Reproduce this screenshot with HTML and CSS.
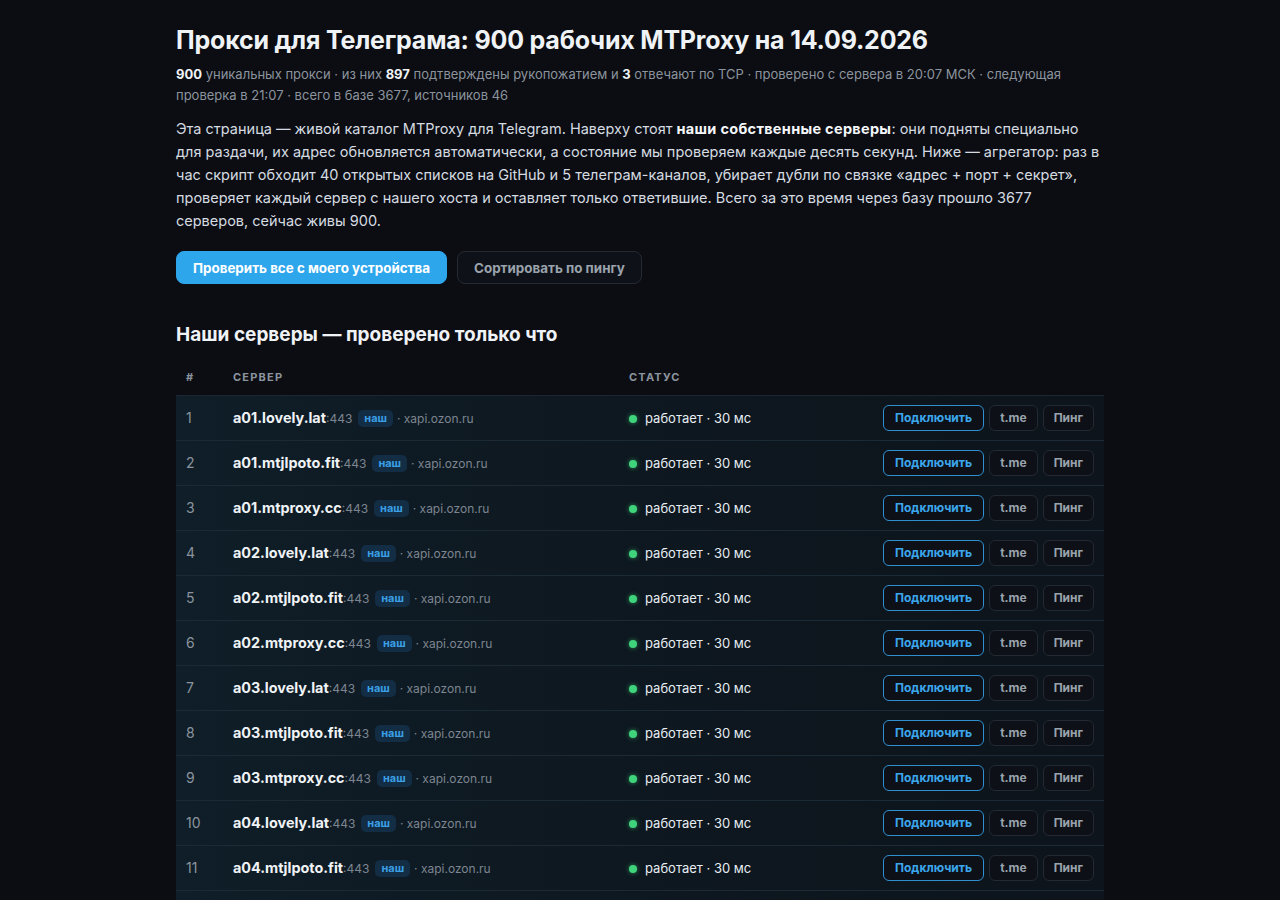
FILE: index.html
```html
<!DOCTYPE html>
<html lang="ru">
<head>
  <meta charset="UTF-8">
  <meta name="viewport" content="width=device-width, initial-scale=1.0">
  <title>Прокси для Телеграма</title>
  <link rel="stylesheet" href="styles.css">
</head>
<body>
<div class="page">
  <h1 class="page-title">Прокси для Телеграма: 900 рабочих MTProxy на 14.09.2026</h1>
  <div class="page-meta">
    <strong>900</strong> уникальных прокси · из них <strong>897</strong> подтверждены рукопожатием и <strong>3</strong> отвечают по TCP · проверено с сервера в 20:07 МСК · следующая проверка в 21:07 · всего в базе 3677, источников 46
  </div>
  <p class="page-intro">
    Эта страница — живой каталог MTProxy для Telegram. Наверху стоят <strong>наши собственные серверы</strong>: они подняты специально для раздачи, их адрес обновляется автоматически, а состояние мы проверяем каждые десять секунд. Ниже — агрегатор: раз в час скрипт обходит 40 открытых списков на GitHub и 5 телеграм-каналов, убирает дубли по связке «адрес + порт + секрет», проверяет каждый сервер с нашего хоста и оставляет только ответившие. Всего за это время через базу прошло 3677 серверов, сейчас живы 900.
  </p>
  <div class="page-actions">
    <button class="btn btn-primary">Проверить все с моего устройства</button>
    <button class="btn btn-ghost">Сортировать по пингу</button>
  </div>

  <h2 class="section-title">Наши серверы — проверено только что</h2>

  <table class="proxy-table">
    <thead>
      <tr>
        <th class="col-num">#</th>
        <th class="col-server">Сервер</th>
        <th class="col-status">Статус</th>
        <th class="col-actions"></th>
      </tr>
    </thead>
    <tbody>
      <tr>
        <td class="col-num">1</td>
        <td class="col-server"><span class="host">a01.lovely.lat</span><span class="port">:443</span> <span class="badge">наш</span> <span class="sni">· xapi.ozon.ru</span></td>
        <td class="col-status"><span class="dot"></span>работает · 30 мс</td>
        <td class="col-actions"><button class="act act-connect">Подключить</button><button class="act">t.me</button><button class="act">Пинг</button></td>
      </tr>
      <tr>
        <td class="col-num">2</td>
        <td class="col-server"><span class="host">a01.mtjlpoto.fit</span><span class="port">:443</span> <span class="badge">наш</span> <span class="sni">· xapi.ozon.ru</span></td>
        <td class="col-status"><span class="dot"></span>работает · 30 мс</td>
        <td class="col-actions"><button class="act act-connect">Подключить</button><button class="act">t.me</button><button class="act">Пинг</button></td>
      </tr>
      <tr>
        <td class="col-num">3</td>
        <td class="col-server"><span class="host">a01.mtproxy.cc</span><span class="port">:443</span> <span class="badge">наш</span> <span class="sni">· xapi.ozon.ru</span></td>
        <td class="col-status"><span class="dot"></span>работает · 30 мс</td>
        <td class="col-actions"><button class="act act-connect">Подключить</button><button class="act">t.me</button><button class="act">Пинг</button></td>
      </tr>
      <tr>
        <td class="col-num">4</td>
        <td class="col-server"><span class="host">a02.lovely.lat</span><span class="port">:443</span> <span class="badge">наш</span> <span class="sni">· xapi.ozon.ru</span></td>
        <td class="col-status"><span class="dot"></span>работает · 30 мс</td>
        <td class="col-actions"><button class="act act-connect">Подключить</button><button class="act">t.me</button><button class="act">Пинг</button></td>
      </tr>
      <tr>
        <td class="col-num">5</td>
        <td class="col-server"><span class="host">a02.mtjlpoto.fit</span><span class="port">:443</span> <span class="badge">наш</span> <span class="sni">· xapi.ozon.ru</span></td>
        <td class="col-status"><span class="dot"></span>работает · 30 мс</td>
        <td class="col-actions"><button class="act act-connect">Подключить</button><button class="act">t.me</button><button class="act">Пинг</button></td>
      </tr>
      <tr>
        <td class="col-num">6</td>
        <td class="col-server"><span class="host">a02.mtproxy.cc</span><span class="port">:443</span> <span class="badge">наш</span> <span class="sni">· xapi.ozon.ru</span></td>
        <td class="col-status"><span class="dot"></span>работает · 30 мс</td>
        <td class="col-actions"><button class="act act-connect">Подключить</button><button class="act">t.me</button><button class="act">Пинг</button></td>
      </tr>
      <tr>
        <td class="col-num">7</td>
        <td class="col-server"><span class="host">a03.lovely.lat</span><span class="port">:443</span> <span class="badge">наш</span> <span class="sni">· xapi.ozon.ru</span></td>
        <td class="col-status"><span class="dot"></span>работает · 30 мс</td>
        <td class="col-actions"><button class="act act-connect">Подключить</button><button class="act">t.me</button><button class="act">Пинг</button></td>
      </tr>
      <tr>
        <td class="col-num">8</td>
        <td class="col-server"><span class="host">a03.mtjlpoto.fit</span><span class="port">:443</span> <span class="badge">наш</span> <span class="sni">· xapi.ozon.ru</span></td>
        <td class="col-status"><span class="dot"></span>работает · 30 мс</td>
        <td class="col-actions"><button class="act act-connect">Подключить</button><button class="act">t.me</button><button class="act">Пинг</button></td>
      </tr>
      <tr>
        <td class="col-num">9</td>
        <td class="col-server"><span class="host">a03.mtproxy.cc</span><span class="port">:443</span> <span class="badge">наш</span> <span class="sni">· xapi.ozon.ru</span></td>
        <td class="col-status"><span class="dot"></span>работает · 30 мс</td>
        <td class="col-actions"><button class="act act-connect">Подключить</button><button class="act">t.me</button><button class="act">Пинг</button></td>
      </tr>
      <tr>
        <td class="col-num">10</td>
        <td class="col-server"><span class="host">a04.lovely.lat</span><span class="port">:443</span> <span class="badge">наш</span> <span class="sni">· xapi.ozon.ru</span></td>
        <td class="col-status"><span class="dot"></span>работает · 30 мс</td>
        <td class="col-actions"><button class="act act-connect">Подключить</button><button class="act">t.me</button><button class="act">Пинг</button></td>
      </tr>
      <tr>
        <td class="col-num">11</td>
        <td class="col-server"><span class="host">a04.mtjlpoto.fit</span><span class="port">:443</span> <span class="badge">наш</span> <span class="sni">· xapi.ozon.ru</span></td>
        <td class="col-status"><span class="dot"></span>работает · 30 мс</td>
        <td class="col-actions"><button class="act act-connect">Подключить</button><button class="act">t.me</button><button class="act">Пинг</button></td>
      </tr>
      <tr>
        <td class="col-num">12</td>
        <td class="col-server"><span class="host">a04.mtproxy.cc</span><span class="port">:443</span> <span class="badge">наш</span> <span class="sni">· xapi.ozon.ru</span></td>
        <td class="col-status"><span class="dot"></span>работает · 30 мс</td>
        <td class="col-actions"><button class="act act-connect">Подключить</button><button class="act">t.me</button><button class="act">Пинг</button></td>
      </tr>
    </tbody>
  </table>
</div>
</body>
</html>
```

FILE: styles.css
```css
* {
  box-sizing: border-box;
}

body {
  margin: 0;
  background: #0b0d12;
  color: #e6edf3;
  font-family: Inter, 'Noto Sans', -apple-system, sans-serif;
}

.page {
  width: 928px;
  margin: 0 auto;
  padding: 24px 0 40px;
}

.page-title {
  margin: 0;
  font-size: 25px;
  font-weight: 700;
  line-height: 32px;
  letter-spacing: -0.2px;
  color: #f0f3f6;
}

.page-meta {
  margin-top: 8px;
  font-size: 13px;
  line-height: 21px;
  color: #8b949e;
}

.page-meta strong {
  color: #f0f3f6;
}

.page-intro {
  margin: 11px 0 0;
  font-size: 14.5px;
  line-height: 23px;
  color: #d5dbe1;
}

.page-intro strong {
  color: #f5f7fa;
  letter-spacing: 0.3px;
}

/* Top buttons */
.page-actions {
  display: flex;
  gap: 10px;
  margin-top: 19px;
}

.btn {
  height: 33px;
  padding: 0 16px;
  border-radius: 8px;
  font-family: inherit;
  font-size: 13.4px;
  font-weight: 700;
  cursor: pointer;
}

.btn-primary {
  background: #2ea6ec;
  border: 1px solid #2ea6ec;
  color: #fff;
}

.btn-ghost {
  background: #0e1117;
  border: 1px solid #262b33;
  color: #9aa3ad;
}

.section-title {
  margin: 38px 0 0;
  font-size: 19px;
  font-weight: 700;
  line-height: 26px;
  color: #f0f3f6;
}

/* Server table */
.proxy-table {
  width: 100%;
  margin-top: 13px;
  border-collapse: collapse;
}

.proxy-table th {
  height: 34px;
  padding: 0 10px 2px;
  text-align: left;
  font-size: 11px;
  font-weight: 700;
  letter-spacing: 1.2px;
  text-transform: uppercase;
  color: #8b949e;
  border-bottom: 1px solid #1c2530;
}

.proxy-table td {
  height: 45px;
  padding: 0 10px;
  font-size: 14px;
  border-bottom: 1px solid #1c2a36;
}

.proxy-table tbody tr {
  background: linear-gradient(90deg, #0f1e28 0%, #0e1820 45%, #0d141b 100%);
}

.col-num {
  width: 47px;
  color: #8b949e;
}

.col-server {
  width: 396px;
}

.col-status {
  width: 230px;
}

.host {
  font-size: 14.4px;
  font-weight: 700;
  color: #f0f3f6;
}

.port {
  font-size: 12px;
  color: #7d8590;
}

.badge {
  display: inline-block;
  margin-left: 2px;
  padding: 2px 6px;
  border-radius: 5px;
  background: #122d44;
  color: #3a9fe4;
  font-size: 11px;
  font-weight: 700;
  line-height: 13px;
  vertical-align: 1px;
}

.sni {
  font-size: 12px;
  color: #7d8590;
}

.proxy-table td.col-status {
  font-size: 13px;
  color: #e6edf3;
}

.dot {
  display: inline-block;
  width: 8px;
  height: 8px;
  margin-right: 8px;
  border-radius: 50%;
  background: #3fd47c;
  box-shadow: 0 0 5px rgba(63, 212, 124, 0.6);
  vertical-align: 0;
}

.col-actions {
  text-align: right;
  white-space: nowrap;
}

.act {
  height: 26px;
  margin-left: 5px;
  padding: 0 10px;
  border-radius: 6px;
  background: #0d1117;
  border: 1px solid #232a33;
  color: #9aa3ad;
  font-family: inherit;
  font-size: 12px;
  font-weight: 700;
  cursor: pointer;
}

.act-connect {
  padding: 0 11px;
  border-color: #2f8fd0;
  color: #3ca6ec;
}
```
